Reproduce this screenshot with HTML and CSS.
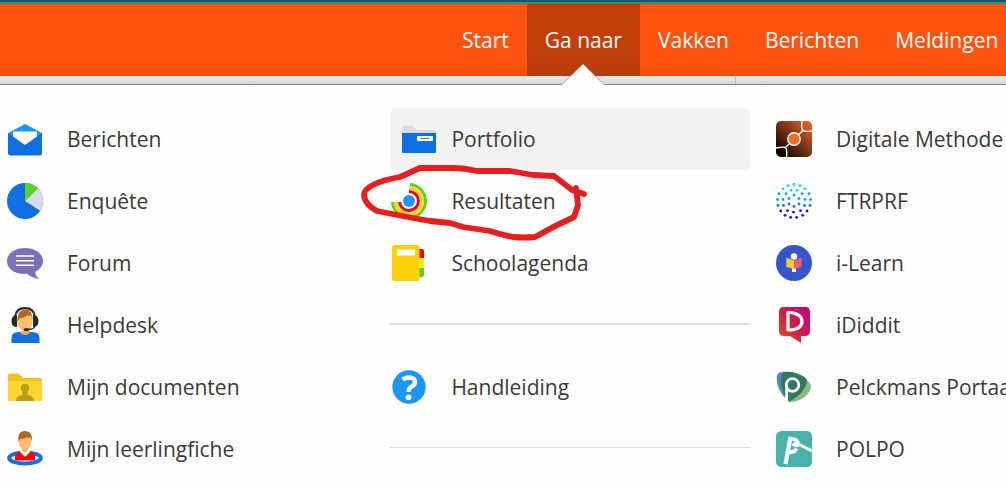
FILE: index.html
```html
<!DOCTYPE html>
<html lang="nl">
<head>
<meta charset="utf-8">
<title>Ga naar</title>
<link rel="stylesheet" href="styles.css">
</head>
<body>
<header class="topbar">
  <nav class="nav">
    <a class="nav-item">Start</a>
    <a class="nav-item active">Ga naar</a>
    <a class="nav-item">Vakken</a>
    <a class="nav-item">Berichten</a>
    <a class="nav-item">Meldingen</a>
  </nav>
</header>
<div class="strip"><span class="strip-cell"></span></div>
<svg class="pointer" width="44" height="23" viewBox="0 0 44 23"><path d="M0 22.5 22 1 44 22.5V23H0Z" fill="#fefefe"/><path d="M1 21.5 22 1 43 21.5" fill="none" stroke="#aaa"/><path d="M2 22 22 2 42 22Z" fill="#fefefe"/></svg>
<main class="menu">
  <div class="column">
    <a class="item"><svg class="icon" viewBox="0 0 36 36"><path d="M1 12 18 3l17 9v5H1Z" fill="#1c97f3"/><path d="M6 10.500h24V17L18 26 6 17Z" fill="#fff"/><path d="M1 12 18 24 35 12V32q0 2.500-2.500 2.500h-29Q1 34.500 1 32Z" fill="#0f70e3"/></svg>Berichten</a>
    <a class="item"><svg class="icon" viewBox="0 0 36 36"><circle cx="18" cy="18" r="18" fill="#0f70e3"/><path d="M18 18 30.500 5.200A18 18 0 0 1 33.200 27.700Z" fill="#dcdbe9"/><path d="M18 18V0a18 18 0 0 1 12.700 5.200Z" fill="#58d41b"/></svg>Enquête</a>
    <a class="item"><svg class="icon" viewBox="0 0 36 36"><path d="M18 3c10 0 18 5.600 18 13 0 5-3.500 8.700-8 11 .5 3 2 5 4 7-5-1-8.500-2.300-12-5.200C8 29.800 0 24 0 16 0 8.600 8 3 18 3Z" fill="#7c70bb"/><path d="M9 11h18M9 15.700h18M9 20.300h18" stroke="#fff" stroke-width="1.500"/></svg>Forum</a>
    <a class="item"><svg class="icon" viewBox="0 0 36 36"><path d="M4.500 36v-5q0-6 7-6h14q7 0 7 6v5Z" fill="#0f70e3"/><path d="M13 24h10q0 4-5 4t-5-4Z" fill="#f4aa58"/><ellipse cx="18" cy="14.500" rx="7.500" ry="9.500" fill="#ffbc6b"/><path d="M10.500 14Q10 3 18 2.500T25.500 14L24 8q-1 1-3 1l1-2q-4 4-9 4Z" fill="#b5651d"/><path d="M8 10Q9 1.200 18 1.200T28 10" fill="none" stroke="#292929" stroke-width="2.200"/><path d="M10 8v12Q4.500 20 4.500 14T10 8ZM26 8v12q5.500 0 5.500-6T26 8Z" fill="#292929"/><path d="M28 18q0 4.500-7 4.500" fill="none" stroke="#292929" stroke-width="1.300"/><ellipse cx="19.500" cy="22.500" rx="3" ry="1.600" fill="#292929"/></svg>Helpdesk</a>
    <a class="item"><svg class="icon" viewBox="0 0 36 36"><path d="M1 12V6q0-1.500 1.500-1.500h9L16 9h17q2 0 2 2v3H1Z" fill="#eec31b"/><path d="M1 12h34v19q0 1-1 1H2q-1 0-1-1Z" fill="#ffd531"/><path d="M9 32q0-4 3-5l3.500-1.300V23q-1.700-2-1.700-4.500 0-3.700 4.200-3.700t4.200 3.700q0 2.500-1.700 4.500v2.700L24 27q3 1 3 5Z" fill="#bd9e17"/></svg>Mijn documenten</a>
    <a class="item"><svg class="icon" viewBox="0 0 36 36"><ellipse cx="18" cy="27" rx="15.800" ry="5.500" fill="#fff" stroke="#0f70e3" stroke-width="4"/><path d="M8 25q0-4 7-5h6q7 1 7 5v3q0 1.500-2 1.500H10q-2 0-2-1.500Z" fill="#f00"/><path d="m14 18-1 3 5 5 5-5-1-3Z" fill="#fff"/><path d="M15 16h6v3l-3 3-3-3Z" fill="#f4aa58"/><ellipse cx="18" cy="10.500" rx="6.200" ry="8.500" fill="#ffbc6b"/><path d="M11.500 11Q10 0 18 0t7 11l-1.500-5q-1 1-3 1.500L21 6q-4 2-8 2Z" fill="#b5651d"/></svg>Mijn leerlingfiche</a>
  </div>
  <div class="column middle">
    <a class="item hovered"><svg class="icon" viewBox="0 0 36 36"><path d="M1 14V6q0-1.500 1.500-1.500h9L16 9h17q2 0 2 2v4H1Z" fill="#dcdbe9"/><path d="M1 12h34v19q0 1-1 1H2q-1 0-1-1Z" fill="#0f70e3"/><path d="M16 15h16v5H16Z" fill="#fff"/><path d="M19.500 17.500h9" stroke="#777" stroke-width="1.200"/></svg>Portfolio</a>
    <a class="item"><svg class="icon" viewBox="0 0 36 36"><g fill="none" stroke-width="3"><path d="M19 1.500A16.500 16.500 0 1 1 1.500 19" stroke="#58d41b"/><path d="M18 4.800A13.300 13.300 0 1 1 4.700 19" stroke="#ffd531" stroke-width="3.800"/><path d="M18 8.500A9.500 9.500 0 1 1 8.500 19" stroke="#f00"/></g><circle cx="18" cy="18" r="6" fill="#1c97f3"/></svg>Resultaten</a>
    <a class="item"><svg class="icon" viewBox="0 0 36 36"><path d="M27 4h4q2 0 2 2v7h-6Z" fill="#f00"/><path d="M27 13h6v10h-6Z" fill="#f5ec1f"/><path d="M27 23h6v7q0 2-2 2h-4Z" fill="#58d41b"/><rect x="1" width="27.500" height="36" rx="2.500" fill="#fad10b"/><path d="M6 4.500h18v6H6Z" fill="#fff"/></svg>Schoolagenda</a>
    <hr class="rule">
    <a class="item"><svg class="icon" viewBox="0 0 36 36"><circle cx="18" cy="18" r="16.700" fill="#1c97f3"/><path d="M11.500 10.500q3-2 7-2 5.500.5 5.500 4.500 0 3-4 5-2.500 1.500-2.500 5" fill="none" stroke="#fff" stroke-width="4.300"/><circle cx="17.500" cy="28.300" r="2.900" fill="#fff"/></svg>Handleiding</a>
    <hr class="rule thin">
  </div>
  <div class="column">
    <a class="item"><svg class="icon" viewBox="0 0 36 36"><defs><linearGradient id="copper" x1="0" y1="1" x2="1" y2="0"><stop offset=".1" stop-color="#080302"/><stop offset="1" stop-color="#f36b2b"/></linearGradient></defs><rect width="36" height="36" rx="5" fill="url(#copper)"/><g fill="none" stroke="#fff" stroke-width="1.400"><path d="M26 0q-1 8 1 9.500 2 1.500 9 .500M22 14l5-4.500M14 22l-4 4M0 27q7-1.500 9.500-.500 2 2 1 9.500"/><circle cx="18" cy="18" r="6.200" fill="#f36b2b"/></g></svg>Digitale Methode</a>
    <a class="item"><svg class="icon" viewBox="0 0 36 36"><g fill="#00dff5"><circle cx="18" cy="1.500" r="1.400"/><circle cx="12" cy="2.700" r="1.400"/><circle cx="24" cy="2.700" r="1.400"/><circle cx="7" cy="5.800" r="1.400"/><circle cx="29" cy="5.800" r="1.400"/><circle cx="15" cy="7.300" r="1.400"/><circle cx="21" cy="7.300" r="1.400"/></g><g fill="#169eeb"><circle cx="3" cy="10.700" r="1.400"/><circle cx="10" cy="10.700" r="1.400"/><circle cx="26" cy="10.700" r="1.400"/><circle cx="33" cy="10.700" r="1.400"/><circle cx="18" cy="12" r="1.400"/><circle cx="1.500" cy="16.500" r="1.400"/><circle cx="7" cy="16.500" r="1.400"/><circle cx="13" cy="15.500" r="1.400"/><circle cx="23" cy="15.500" r="1.400"/><circle cx="29" cy="16.500" r="1.400"/><circle cx="34.500" cy="16.500" r="1.400"/></g><g fill="#0878e8"><circle cx="2" cy="22.500" r="1.400"/><circle cx="7.500" cy="22.500" r="1.400"/><circle cx="13" cy="21" r="1.400"/><circle cx="18" cy="23.500" r="1.400"/><circle cx="23" cy="21" r="1.400"/><circle cx="28.500" cy="22.500" r="1.400"/><circle cx="34" cy="22.500" r="1.400"/></g><g fill="#1616e8"><circle cx="4.700" cy="28" r="1.400"/><circle cx="11.500" cy="27.700" r="1.400"/><circle cx="17.500" cy="29.200" r="1.400"/><circle cx="24.500" cy="27.700" r="1.400"/><circle cx="31" cy="28" r="1.400"/><circle cx="9" cy="32.300" r="1.400"/><circle cx="14.700" cy="34.400" r="1.400"/><circle cx="20.700" cy="34.400" r="1.400"/><circle cx="26.700" cy="32.300" r="1.400"/></g></svg>FTRPRF</a>
    <a class="item"><svg class="icon" viewBox="0 0 36 36"><circle cx="18" cy="18" r="18" fill="#3655ca"/><circle cx="18" cy="11.500" r="3.200" fill="#fff"/><path d="M16 21h4v6h-4Z" fill="#fff"/><path d="m10.300 12.500 7.700 3.300V24l-7.700-2Z" fill="#f6cd2c"/><path d="M25.700 12.500 18 15.800V24l7.700-2Z" fill="#f05b7c"/></svg>i-Learn</a>
    <a class="item"><svg class="icon" viewBox="0 0 36 36"><defs><linearGradient id="magenta" x1="0" y1="1" x2="1" y2="0"><stop offset=".1" stop-color="#d94a18"/><stop offset=".5" stop-color="#c91f4b"/><stop offset="1" stop-color="#c4008c"/></linearGradient></defs><path d="M8 0h21q5 0 5 5v19q0 5-5 5h-4v7l-11-7H8q-5 0-5-5V5q0-5 5-5Z" fill="url(#magenta)"/><path d="M12 5.500h2.500Q26 7 26 14.500T14.500 23H12Z" fill="none" stroke="#fff" stroke-width="3.200" stroke-linejoin="round"/></svg>iDiddit</a>
    <a class="item"><svg class="icon" viewBox="0 0 36 36"><path d="M1 6.500Q2 1 17 3.500L12 32Q-1 20 1 6.500Z" fill="#518ab4"/><path d="M29 10q7 4.500 6 9-4 12-21.500 14.500Z" fill="#8abb7d"/><path d="M6 6Q7 1.500 17 3.300 32 7.500 31 13 29 24 13 33 2 18 6 6Z" fill="#347761"/><circle cx="16.500" cy="16" r="6.300" fill="none" stroke="#fff" stroke-width="2.700"/><path d="M10.600 16v17" stroke="#fff" stroke-width="2.800"/></svg>Pelckmans Portaal</a>
    <a class="item"><svg class="icon" viewBox="0 0 36 36"><rect width="36" height="36" rx="5.500" fill="#46b2a9"/><g fill="none" stroke="#fff"><path d="M14.500 6 9.500 33" stroke-width="4.200"/><path d="M13 7.500q9 .500 9 4.500M12 21.500q7 0 8.500-4" stroke-width="3.600"/><path d="M17 15q1.500-4 5-2L36 20" stroke-width="3"/><path d="M19 16q2-2 4-1" stroke-width="2.400"/></g></svg>POLPO</a>
  </div>
</main>
<svg class="scribble" width="232" height="84" viewBox="358 160 232 84"><path d="M576 188 578 205 574 217Q554 226 535 237 524 238 513 237 502 235 490 231L463 227 450 223 430 221 413 218 377 211Q364 204 364 194 365 189 373 185 382 180 400 177L420 168H453Q465 168 477 171H510Q522 173 533 175L554 176 572 190 584 194" fill="none" stroke="#e81d1d" stroke-width="5.800" stroke-linecap="round" stroke-linejoin="round"/></svg>
</body>
</html>
```
FILE: styles.css
```css
body {
  margin: 0;
  width: 1006px;
  height: 487px;
  overflow: hidden;
  position: relative;
  background: #fefefe;
  color: #3a3a3a;
  font-family: "Open Sans", "Noto Sans", sans-serif;
  font-size: 21px;
}

.topbar {
  box-sizing: border-box;
  height: 76px;
  border-top: 2px solid #145b62;
  background: linear-gradient(#458383 2px, #ff530f 2px, #ff530f 58px, #f34f0e);
}

.nav {
  display: flex;
  height: 72px;
  padding: 2px 0 0 444px;
}

.nav-item {
  flex: none;
  padding: 0 18px;
  line-height: 72px;
  color: #fff;
  white-space: nowrap;
}

.nav-item.active {
  background: linear-gradient(#c23e0b 55px, #b83a0b);
}

.strip {
  box-sizing: border-box;
  height: 9px;
  border-bottom: 1px solid #858585;
  background: linear-gradient(#efefef, #d5d5d5);
}

.strip-cell {
  display: block;
  box-sizing: border-box;
  width: 736px;
  height: 8px;
  border-right: 1px solid #bbb;
}

.pointer {
  position: absolute;
  left: 561px;
  top: 63px;
}

.menu {
  display: grid;
  grid-template-columns: 360px 360px 232px;
  column-gap: 24px;
  padding: 23px 0 0 6px;
}

.column {
  min-width: 0;
}

.item {
  display: flex;
  align-items: center;
  box-sizing: border-box;
  height: 62px;
  padding-left: 1px;
  gap: 24px;
  white-space: nowrap;
}

.column + .column .item {
  padding-left: 2px;
}

.column.middle .item {
  padding-left: 1px;
  gap: 24.400px;
}

.column.middle .item.hovered {
  padding-left: 11px;
  gap: 14.400px;
  border-radius: 6px;
  background: #f2f2f2;
}

.icon {
  flex: none;
  width: 36px;
  height: 36px;
}

.rule {
  height: 2px;
  margin: 29px 0 31px;
  border: 0;
  background: #dbdbdb;
}

.rule.thin {
  height: 1px;
}

.scribble {
  position: absolute;
  left: 358px;
  top: 160px;
}
```
